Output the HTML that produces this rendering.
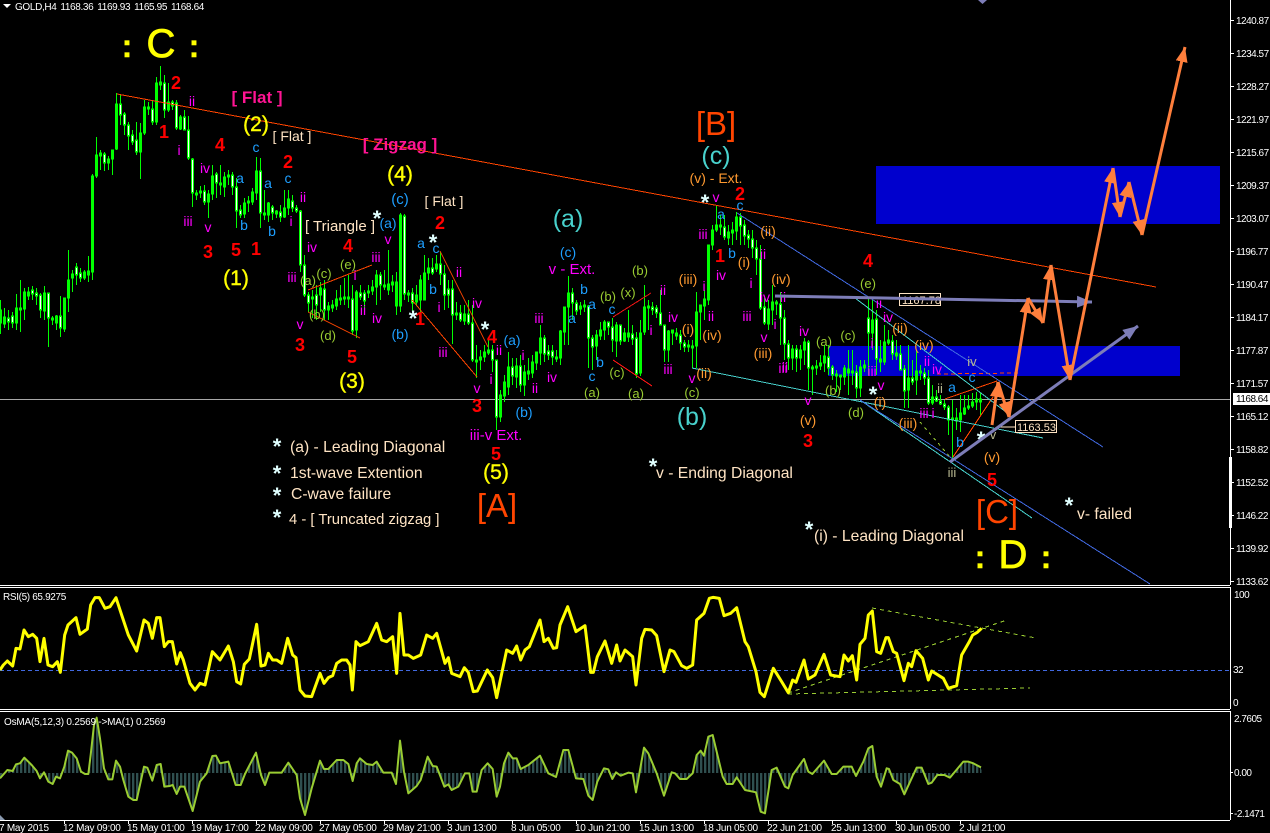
<!DOCTYPE html>
<html><head><meta charset="utf-8"><title>GOLD,H4</title>
<style>
html,body{margin:0;padding:0;background:#000;width:1270px;height:833px;overflow:hidden}
svg{display:block}
text{font-family:"Liberation Sans",Arial,sans-serif}
.ax text{fill:#fff;font-size:10px}
.pr text{letter-spacing:-.5px}
.c{text-anchor:middle}
.m text{fill:#f0f;font-size:14px}
.b text{fill:#1e9fff;font-size:14px}
.g text{fill:#9acd32;font-size:13px}
.o text{fill:#ff9a30;font-size:14px}
.r text{fill:#f00;font-size:18px;font-weight:bold}
.Y text{fill:#ff0;font-size:21px;stroke:#ff0;stroke-width:.4px}
.t text{fill:#48d1cc;font-size:25px}
.s text{fill:#e0ffff;font-size:22px;font-weight:bold}
.n text{fill:#ffe4c4;font-size:15.7px}
.w text{fill:#ffe4c4;font-size:14px}
.p text{fill:#ff1493;font-size:17px;font-weight:bold}
.e text{fill:#ff4500;font-size:33px}
</style></head><body>
<svg xmlns="http://www.w3.org/2000/svg" width="1270" height="833" viewBox="0 0 1270 833">
<defs>
<marker id="ao" markerUnits="userSpaceOnUse" markerWidth="16" markerHeight="12" refX="15" refY="6" orient="auto"><path d="M0 0L15 6L0 12z" fill="#ff7f3c"/></marker>
<marker id="ap" markerUnits="userSpaceOnUse" markerWidth="16" markerHeight="12" refX="15" refY="6" orient="auto"><path d="M0 0L15 6L0 12z" fill="#7d7db8"/></marker>
<pattern id="h" patternUnits="userSpaceOnUse" width="12" height="12"><rect x="0" y="0" width="7" height="12" fill="#2f4f4f"/></pattern>
</defs>
<rect width="1270" height="833" fill="#000"/>
<!-- zones -->
<rect x="876" y="166" width="344" height="58" fill="#0000cd"/>
<rect x="828" y="346" width="352" height="30" fill="#0000cd"/>
<!-- price line -->
<path d="M0 399.5H1230" stroke="#a8a8a8" stroke-width="1"/>
<!-- candles -->
<g transform="translate(.5 0)" shape-rendering="crispEdges">
<path fill="none" stroke="#0f0" stroke-width="1" d="M0 300V334M4 308V328M8 310V330M12 312V328M16 294V330M20 280V332M24 288V320M28 287V300M32 286V300M36 288V305M40 293V318M44 286V320M48 293V347M52 316V325M56 315V330M60 296V337M64 298V332M68 250V312M72 270V292M76 263V285M80 268V282M84 270V280M88 256V282M92 174V280M96 137V178M100 150V170M104 152V171M108 156V170M112 150V175M116 93V150M120 95V125M124 112V135M128 122V150M132 130V145M136 122V155M140 123V179M144 100V135M148 102V115M152 100V125M156 77V125M160 66V90M164 75V118M168 83V112M172 100V110M176 100V130M180 115V130M184 110V130M188 116V160M192 158V207M196 190V200M200 186V198M204 185V205M208 190V218M212 165V200M216 172V198M220 165V195M224 172V197M228 170V185M232 172V195M236 178V228M240 205V218M244 198V218M248 196V212M252 188V205M256 157V200M260 158V228M264 190V220M268 202V222M272 205V220M276 210V218M280 205V222M284 190V218M288 190V215M292 195V212M296 205V213M300 210V272M304 255V297M308 292V312M312 290V318M316 285V320M320 282V312M324 280V320M328 302V320M332 300V312M336 290V310M340 285V305M344 278V305M348 275V308M352 285V335M356 290V338M360 285V300M364 290V310M368 285V298M372 280V295M376 270V305M380 272V300M384 270V290M388 250V295M392 275V292M396 272V315M400 213V312M404 214V300M408 290V302M412 288V312M416 285V305M420 275V318M424 255V300M428 258V280M432 258V275M436 255V272M440 252V285M444 265V310M448 280V308M452 280V344M456 302V320M460 305V322M464 305V325M468 300V325M472 305V362M476 345V378M480 350V370M484 345V362M488 340V355M492 345V372M496 360V430M500 390V422M504 375V402M508 352V395M512 358V385M516 358V388M520 355V392M524 365V396M528 358V380M532 355V378M536 352V370M540 325V365M544 335V362M548 345V360M552 345V365M556 350V362M560 330V365M564 308V345M568 276V345M572 288V320M576 300V315M580 302V315M584 300V312M588 305V368M592 335V370M596 330V360M600 322V340M604 320V340M608 322V335M612 318V352M616 322V357M620 325V345M624 328V342M628 310V342M632 325V345M636 332V378M640 320V376M644 285V335M648 300V330M652 302V315M656 305V318M660 290V325M664 325V362M668 330V362M672 330V345M676 328V340M680 330V350M684 340V352M688 340V352M692 340V368M696 292V368M700 305V340M704 290V320M708 245V305M712 225V250M716 206V232M720 215V235M724 215V240M728 225V245M732 222V245M736 212V240M740 213V245M744 220V245M748 230V248M752 230V258M756 240V275M760 245V310M764 298V325M768 300V330M772 285V325M776 300V315M780 292V345M784 310V360M788 340V370M792 345V370M796 345V372M800 345V370M804 338V365M808 340V390M812 365V395M816 360V375M820 355V370M824 345V372M828 345V375M832 365V380M836 370V392M840 375V390M844 365V385M848 350V395M852 350V385M856 365V398M860 360V397M864 360V372M868 298V375M872 300V350M876 310V375M880 340V372M884 325V365M888 330V345M892 335V360M896 340V360M900 345V370M904 365V408M908 345V408M912 360V385M916 350V395M920 365V380M924 368V385M928 370V405M932 385V405M936 390V402M940 395V405M944 400V410M948 405V435M952 400V460M956 408V430M960 395V432M964 395V415M968 395V410M972 393V408M976 392V410M980 393V415"/>
<g fill="none" stroke="#0f0" stroke-width="3" stroke-linecap="square">
<path d="M0 311V322M4 318V323M16 309V322M24 293V308M28 293V295M44 294V310M56 317V322M64 299V328M68 281V297M72 275V277M84 273V277M88 272V274M92 177V271M96 156V175M108 160V162M112 151V158M116 105V148M140 134V151M144 108V132M156 84V121M168 103V109M180 118V128M200 192V192M208 195V201M212 177V193M224 178V186M228 176V176M244 204V213M248 202V202M252 193V201M256 172V192M268 204V214M284 209V216M288 200V207M320 289V294M328 307V309M332 307V306M336 300V305M340 299V299M356 293V329M368 292V292M372 288V290M376 276V286M388 285V289M392 283V284M396 283V305M400 216V305M416 296V301M420 281V299M424 274V299M428 269V272M436 265V268M464 315V320M480 358V359M484 353V356M500 396V416M504 383V395M508 368V386M516 367V376M524 373V384M532 363V372M536 353V362M540 339V352M560 332V357M564 308V331M568 294V306M580 307V308M584 306V306M596 336V345M600 331V335M604 323V329M616 326V340M624 334V340M628 334V336M640 334V372M644 308V331M668 332V349M696 313V345M700 306V311M704 300V305M708 246V299M712 231V244M716 226V229M728 233V237M732 231V232M736 218V230M768 310V323M772 303V309M792 350V357M800 351V357M804 343V349M816 367V367M820 364V365M824 357V362M844 369V376M852 372V372M860 368V387M864 366V367M872 321V332M884 343V361M908 379V389M916 372V379M932 398V402M960 414V419M964 409V413M968 407V407M972 403V405M976 400V401"/>
<path d="M8 319V321M12 317V322M20 309V309M32 291V293M36 294V295M40 296V309M48 294V317M52 319V319M60 317V327M76 268V274M80 274V277M100 154V155M104 155V162M120 105V114M124 115V124M128 126V135M132 136V141M136 141V151M148 108V108M152 110V121M160 84V83M164 84V109M172 103V105M176 104V127M184 118V129M188 131V157M192 160V192M196 194V194M204 192V201M216 175V182M220 184V184M232 176V186M236 188V210M240 211V214M260 172V212M264 214V214M272 208V212M276 213V212M280 213V216M292 202V207M296 209V210M300 212V264M304 266V294M308 296V302M312 298V298M316 296V304M324 290V309M344 298V298M348 298V298M352 300V330M360 294V296M364 294V300M380 276V284M384 286V286M404 217V293M408 294V294M412 294V302M432 269V272M440 265V273M444 275V294M448 290V294M452 290V314M456 314V314M460 314V319M468 315V322M472 324V359M476 361V361M488 351V352M492 351V359M496 361V416M512 368V375M520 367V384M528 373V372M544 339V353M548 352V354M552 352V356M556 358V358M572 294V302M576 304V310M588 307V337M592 339V346M608 323V326M612 328V339M620 326V340M632 335V338M636 339V373M648 307V307M652 308V309M656 309V312M660 314V324M664 326V349M672 332V331M676 334V335M680 336V342M684 344V346M688 346V346M692 347V347M720 226V226M724 228V236M740 218V225M744 226V235M748 236V238M752 240V247M756 249V258M760 260V307M764 308V322M776 303V303M780 305V317M784 319V343M788 345V357M796 350V357M808 343V367M812 368V368M828 358V367M832 368V374M836 375V375M840 376V376M848 370V372M856 373V387M868 319V332M876 320V358M880 360V361M888 342V341M892 342V353M896 355V354M900 355V369M904 370V390M912 379V381M920 372V372M924 374V377M928 379V402M936 398V400M940 402V403M944 405V406M948 408V419M952 419V419M956 420V419M980 400V401"/>
</g>
<path fill="none" stroke="#fff" stroke-width="1" d="M8 319V321M12 317V322M32 291V293M36 294V295M40 296V309M48 294V317M60 317V327M76 268V274M80 274V277M104 155V162M120 105V114M124 115V124M128 126V135M132 136V141M136 141V151M152 110V121M164 84V109M172 103V105M176 104V127M184 118V129M188 131V157M192 160V192M204 192V201M216 175V182M232 176V186M236 188V210M240 211V214M260 172V212M272 208V212M280 213V216M292 202V207M296 209V210M300 212V264M304 266V294M308 296V302M316 296V304M324 290V309M352 300V330M360 294V296M364 294V300M380 276V284M404 217V293M412 294V302M432 269V272M440 265V273M444 275V294M448 290V294M452 290V314M460 314V319M468 315V322M472 324V359M492 351V359M496 361V416M512 368V375M520 367V384M544 339V353M548 352V354M552 352V356M572 294V302M576 304V310M588 307V337M592 339V346M608 323V326M612 328V339M620 326V340M632 335V338M636 339V373M652 308V309M656 309V312M660 314V324M664 326V349M680 336V342M684 344V346M724 228V236M740 218V225M744 226V235M748 236V238M752 240V247M756 249V258M760 260V307M764 308V322M780 305V317M784 319V343M788 345V357M796 350V357M808 343V367M828 358V367M832 368V374M856 373V387M868 319V332M876 320V358M892 342V353M900 355V369M904 370V390M912 379V381M924 374V377M928 379V402M936 398V400M940 402V403M944 405V406M948 408V419"/>
</g>
<!-- thin lines -->
<g fill="none" stroke-width="1" shape-rendering="crispEdges">
<path stroke="#ff4500" d="M117 94L1156 287M308 290L372 265M308 312L360 338M440 251L488 347M412 300L477 377"/>
<path stroke="#f01414" d="M613 317L651 293M613 360L652 386"/>
<path stroke="#ff4500" d="M945 399L997 381M953 457L993 397"/>
<path stroke="#ff4500" stroke-dasharray="4 3" d="M937 374L1018 373"/>
<path stroke="#48d1cc" d="M692 368L1043 438M855 298L1010 415M860 400L1032 518"/>
<path stroke="#4169e1" d="M737 213L1103 447M860 400L1150 584"/>
<path stroke="#9acd32" stroke-dasharray="3 4" d="M920 422L950 457"/>
</g>
<!-- price boxes -->
<path d="M1000 427H1015" stroke="#ffe4c4"/>
<rect x="899.5" y="293.5" width="41" height="12" fill="#000" stroke="#ffe4c4"/>
<text x="902" y="304" fill="#ffe4c4" font-size="11">1167.78</text>
<rect x="1015.5" y="420.5" width="41" height="12" fill="#000" stroke="#ffe4c4"/>
<text x="1017" y="431" fill="#ffe4c4" font-size="11">1163.53</text>
<!-- labels -->
<g class="m c">
<text x="192" y="106">ii</text><text x="179" y="155">i</text><text x="205" y="173">iv</text><text x="188" y="226">iii</text><text x="208" y="232">v</text><text x="303" y="202">ii</text><text x="291" y="226">i</text><text x="312" y="252">iv</text><text x="292" y="282">iii</text><text x="376" y="262">iii</text><text x="388" y="244">v</text><text x="355" y="280">i</text><text x="300" y="329">v</text><text x="363" y="315">ii</text><text x="377" y="323">iv</text><text x="459" y="277">ii</text><text x="439" y="312">i</text><text x="477" y="308">iv</text><text x="443" y="357">iii</text><text x="477" y="393">v</text><text x="499" y="355">ii</text><text x="491" y="384">i</text><text x="523" y="360">i</text><text x="539" y="323">iii</text><text x="535" y="393">ii</text><text x="552" y="382">iv</text><text x="663" y="295">ii</text><text x="673" y="322">iv</text><text x="651" y="335">i</text><text x="668" y="374">iii</text><text x="704" y="291">i</text><text x="711" y="321">ii</text><text x="703" y="239">iii</text><text x="721" y="280">iv</text><text x="716" y="202">v</text><text x="763" y="259">ii</text><text x="751" y="288">i</text><text x="747" y="321">iii</text><text x="765" y="302">iv</text><text x="764" y="342">v</text><text x="775" y="329">i</text><text x="783" y="302">ii</text><text x="783" y="373">iii</text><text x="804" y="336">iv</text><text x="808" y="405">v</text><text x="692" y="383">v</text><text x="785" y="372">ii</text><text x="879" y="308">ii</text><text x="888" y="322">iv</text><text x="872" y="348">i</text><text x="872" y="376">iii</text><text x="927" y="366">ii</text><text x="937" y="374">iv</text><text x="924" y="418">iii</text><text x="933" y="418">i</text><text x="881" y="390">v</text>
<text x="496" y="440" style="font-size:15px">iii-v Ext.</text><text x="572" y="274" style="font-size:15px">v - Ext.</text>
</g>
<g class="b c">
<text x="240" y="183">a</text><text x="256" y="152">c</text><text x="244" y="230">b</text><text x="268" y="188">a</text><text x="288" y="183">c</text><text x="272" y="236">b</text><text x="388" y="228">(a)</text><text x="400" y="204" style="font-size:15px">(c)</text><text x="400" y="339">(b)</text><text x="421" y="248">a</text><text x="436" y="253">c</text><text x="433" y="294">b</text><text x="512" y="345">(a)</text><text x="524" y="417">(b)</text><text x="568" y="257">(c)</text><text x="584" y="294">b</text><text x="592" y="309">a</text><text x="572" y="323">a</text><text x="600" y="367">b</text><text x="592" y="381">c</text><text x="612" y="314">c</text><text x="721" y="219">a</text><text x="732" y="258">b</text><text x="740" y="210">c</text><text x="972" y="382">c</text><text x="952" y="392">a</text><text x="960" y="447">b</text>
</g>
<g class="g c">
<text x="308" y="285">(a)</text><text x="324" y="278">(c)</text><text x="348" y="269">(e)</text><text x="317" y="319">(b)</text><text x="328" y="340">(d)</text><text x="608" y="301">(b)</text><text x="628" y="297">(x)</text><text x="640" y="275">(b)</text><text x="617" y="377">(c)</text><text x="592" y="397">(a)</text><text x="636" y="398">(a)</text><text x="692" y="397">(c)</text><text x="824" y="346">(a)</text><text x="833" y="395">(b)</text><text x="868" y="288">(e)</text><text x="848" y="340">(c)</text><text x="856" y="417">(d)</text>
</g>
<g class="o c">
<text x="688" y="334">(i)</text><text x="688" y="284">(iii)</text><text x="712" y="340">(iv)</text><text x="704" y="378">(ii)</text><text x="744" y="267">(i)</text><text x="768" y="236">(ii)</text><text x="781" y="284">(iv)</text><text x="763" y="358">(iii)</text><text x="808" y="425">(v)</text><text x="900" y="333">(ii)</text><text x="924" y="350">(iv)</text><text x="908" y="428">(iii)</text><text x="880" y="407">(i)</text><text x="992" y="462">(v)</text><text x="716" y="183">(v) - Ext.</text>
</g>
<g class="c" fill="#b8b890" font-size="13">
<text x="972" y="366">iv</text><text x="940" y="393">ii</text><text x="952" y="477">iii</text><text x="993" y="439">v</text>
</g>
<g class="r c">
<text x="176" y="89">2</text><text x="164" y="138">1</text><text x="220" y="151">4</text><text x="288" y="168">2</text><text x="208" y="258">3</text><text x="236" y="256">5</text><text x="256" y="255">1</text><text x="348" y="252">4</text><text x="300" y="351">3</text><text x="352" y="363">5</text><text x="440" y="229">2</text><text x="420" y="325">1</text><text x="492" y="343">4</text><text x="477" y="412">3</text><text x="496" y="460">5</text><text x="720" y="262">1</text><text x="740" y="200">2</text><text x="808" y="447">3</text><text x="868" y="267">4</text><text x="992" y="486">5</text>
</g>
<g class="Y c">
<text x="236" y="285">(1)</text><text x="256" y="131">(2)</text><text x="352" y="388">(3)</text><text x="400" y="181">(4)</text><text x="496" y="479">(5)</text>
<text x="161" y="57" style="font-size:40px;stroke-width:.8px">C</text><text x="127" y="57" style="font-size:32px;font-weight:bold">:</text><text x="194" y="57" style="font-size:32px;font-weight:bold">:</text>
<text x="1013" y="568" style="font-size:40px;stroke-width:.8px">D</text><text x="980" y="568" style="font-size:32px;font-weight:bold">:</text><text x="1046" y="568" style="font-size:32px;font-weight:bold">:</text>
</g>
<g class="t c"><text x="568" y="227">(a)</text><text x="692" y="425">(b)</text><text x="716" y="164">(c)</text></g>
<g class="e c"><text x="716" y="135">[B]</text><text x="497" y="517">[A]</text><text x="997" y="523">[C]</text></g>
<g class="p c"><text x="257" y="103">[ Flat ]</text><text x="400" y="150">[ Zigzag ]</text></g>
<g class="w c"><text x="292" y="141">[ Flat ]</text><text x="340" y="231" style="font-size:15px">[ Triangle ]</text><text x="444" y="206">[ Flat ]</text></g>
<g class="n">
<text x="290" y="452">(a) - Leading Diagonal</text><text x="290" y="478">1st-wave Extention</text><text x="291" y="499">C-wave failure</text><text x="289" y="524" style="font-size:14.8px">4 - [ Truncated zigzag ]</text><text x="656" y="478">v - Ending Diagonal</text><text x="814" y="541">(i) - Leading Diagonal</text><text x="1077" y="519">v- failed</text>
</g>
<g class="s c">
<text x="377" y="226">*</text><text x="413" y="326">*</text><text x="433" y="250">*</text><text x="485" y="337">*</text><text x="705" y="210">*</text><text x="873" y="402">*</text><text x="981" y="447">*</text><text x="277" y="454">*</text><text x="277" y="481">*</text><text x="277" y="503">*</text><text x="277" y="525">*</text><text x="653" y="474">*</text><text x="809" y="537">*</text><text x="1069" y="513">*</text>
</g>
<!-- purple arrows -->
<g fill="none" stroke="#7d7db8" stroke-width="3">
<path d="M775 296L1092 302" marker-end="url(#ap)"/>
<path d="M950 462L1138 326" marker-end="url(#ap)"/>
</g>
<!-- orange arrows -->
<g fill="none" stroke="#ff7f3c" stroke-width="3">
<path d="M992 425L998 382" marker-end="url(#ao)"/>
<path d="M998 382L1009 417" marker-end="url(#ao)"/>
<path d="M1009 417L1028 298" marker-end="url(#ao)"/>
<path d="M1028 298L1043 323" marker-end="url(#ao)"/>
<path d="M1043 323L1051 265" marker-end="url(#ao)"/>
<path d="M1051 265L1070 380" marker-end="url(#ao)"/>
<path d="M1070 380L1113 168" marker-end="url(#ao)"/>
<path d="M1113 168L1120 217" marker-end="url(#ao)"/>
<path d="M1120 217L1129 182" marker-end="url(#ao)"/>
<path d="M1129 182L1142 235" marker-end="url(#ao)"/>
<path d="M1142 235L1185 47" marker-end="url(#ao)"/>
</g>
<!-- cover below main panel -->
<rect x="0" y="585" width="1270" height="248" fill="#000"/>
<!-- RSI -->
<path d="M0 670.5H1230" stroke="#4169e1" stroke-dasharray="4 3"/>
<g fill="none" stroke="#9acd32" stroke-dasharray="4 4" stroke-width="1" shape-rendering="crispEdges">
<path d="M872 608L1036 638M788 693L1007 620M788 694L1030 688"/>
</g>
<g transform="translate(0 585) scale(.33333)" fill="none" stroke="#ff0" stroke-width="9" stroke-linejoin="round">
<polyline points="0,255 10,240 22,228 38,243 48,190 60,192 72,135 85,155 98,148 110,160 120,230 132,160 144,240 158,245 172,230 181,262 194,150 204,120 228,98 240,148 262,132 272,60 285,38 298,38 315,70 330,65 348,38 365,90 385,150 410,198 432,105 445,115 457,160 470,98 480,98 493,185 505,170 517,170 530,237 541,203 550,225 570,295 585,315 600,295 615,300 637,200 660,225 685,183 700,230 710,290 722,297 733,238 748,222 770,118 783,243 795,240 805,205 818,225 830,225 845,235 863,160 878,210 888,218 900,315 915,333 935,335 960,265 972,295 985,278 998,272 1010,235 1025,225 1040,225 1050,240 1057,315 1068,170 1080,182 1105,170 1130,115 1145,165 1160,170 1178,155 1190,265 1200,85 1212,210 1225,210 1240,220 1262,210 1280,150 1298,160 1310,145 1335,235 1345,218 1355,265 1380,275 1393,248 1405,262 1420,320 1432,318 1462,255 1478,278 1490,338 1500,290 1520,195 1538,205 1550,183 1562,225 1575,195 1588,185 1620,105 1632,170 1645,160 1660,190 1670,188 1680,120 1703,65 1728,140 1755,122 1772,262 1780,262 1792,215 1815,168 1835,235 1850,180 1860,228 1875,195 1898,215 1908,300 1925,160 1935,133 1955,135 1970,152 1992,260 2010,195 2022,200 2045,242 2060,250 2078,240 2090,105 2112,85 2128,40 2140,37 2158,40 2172,92 2192,85 2210,68 2235,170 2245,185 2268,260 2280,322 2293,335 2320,250 2345,290 2365,323 2378,285 2388,292 2412,225 2425,282 2445,270 2472,208 2492,270 2520,275 2532,210 2545,228 2557,212 2570,285 2580,178 2595,160 2605,90 2617,78 2630,200 2642,205 2658,158 2665,158 2680,200 2690,205 2712,287 2725,235 2735,245 2748,197 2768,220 2785,285 2795,258 2830,280 2845,310 2870,302 2885,210 2908,170 2918,150 2932,142 2945,130"/>
</g>
<!-- OsMA -->
<g transform="translate(0 585) scale(.33333)" stroke-linejoin="round">
<polygon fill="url(#h)" shape-rendering="crispEdges" points="0,564 0,580 22,555 38,558 48,538 60,535 73,518 95,540 110,558 120,580 132,562 145,590 158,597 168,575 180,580 193,545 204,497 216,503 230,520 243,560 255,567 265,567 272,510 282,420 290,398 300,460 312,550 325,583 337,583 348,527 360,545 370,585 385,635 400,645 410,645 432,545 442,548 457,587 470,540 482,537 493,605 510,603 518,600 530,627 540,605 553,605 578,678 600,590 620,565 637,513 648,512 660,535 685,530 707,600 722,600 735,567 768,503 783,570 795,600 808,563 845,563 865,533 890,570 900,640 915,690 935,610 960,527 972,552 985,552 1010,525 1030,525 1045,537 1058,588 1070,535 1080,520 1100,537 1118,540 1130,530 1150,563 1175,563 1188,597 1200,467 1212,560 1225,625 1250,603 1262,585 1283,515 1298,543 1310,545 1333,605 1345,598 1355,615 1375,605 1395,565 1408,565 1418,620 1430,620 1445,555 1463,535 1478,552 1490,635 1500,605 1512,535 1525,503 1538,520 1550,520 1562,552 1585,540 1620,512 1645,565 1668,576 1690,495 1705,495 1728,580 1750,582 1765,632 1778,645 1792,590 1812,550 1825,553 1837,582 1848,562 1862,572 1885,563 1898,565 1908,622 1932,488 1945,505 1970,565 1992,632 2015,562 2025,565 2040,582 2060,582 2078,565 2090,510 2102,497 2112,512 2125,455 2138,450 2168,575 2180,597 2198,597 2210,577 2235,615 2268,622 2282,680 2295,685 2315,555 2330,548 2355,605 2365,610 2378,570 2412,522 2425,560 2437,567 2472,527 2495,567 2510,567 2530,545 2555,545 2568,573 2590,530 2605,490 2617,483 2630,575 2643,605 2660,550 2667,552 2680,585 2700,597 2713,628 2735,580 2750,548 2765,548 2785,597 2795,593 2812,570 2833,570 2850,578 2890,530 2905,530 2920,535 2943,547 2945,564"/>
<polyline fill="none" stroke="#9acd32" stroke-width="6" points="0,580 22,555 38,558 48,538 60,535 73,518 95,540 110,558 120,580 132,562 145,590 158,597 168,575 180,580 193,545 204,497 216,503 230,520 243,560 255,567 265,567 272,510 282,420 290,398 300,460 312,550 325,583 337,583 348,527 360,545 370,585 385,635 400,645 410,645 432,545 442,548 457,587 470,540 482,537 493,605 510,603 518,600 530,627 540,605 553,605 578,678 600,590 620,565 637,513 648,512 660,535 685,530 707,600 722,600 735,567 768,503 783,570 795,600 808,563 845,563 865,533 890,570 900,640 915,690 935,610 960,527 972,552 985,552 1010,525 1030,525 1045,537 1058,588 1070,535 1080,520 1100,537 1118,540 1130,530 1150,563 1175,563 1188,597 1200,467 1212,560 1225,625 1250,603 1262,585 1283,515 1298,543 1310,545 1333,605 1345,598 1355,615 1375,605 1395,565 1408,565 1418,620 1430,620 1445,555 1463,535 1478,552 1490,635 1500,605 1512,535 1525,503 1538,520 1550,520 1562,552 1585,540 1620,512 1645,565 1668,576 1690,495 1705,495 1728,580 1750,582 1765,632 1778,645 1792,590 1812,550 1825,553 1837,582 1848,562 1862,572 1885,563 1898,565 1908,622 1932,488 1945,505 1970,565 1992,632 2015,562 2025,565 2040,582 2060,582 2078,565 2090,510 2102,497 2112,512 2125,455 2138,450 2168,575 2180,597 2198,597 2210,577 2235,615 2268,622 2282,680 2295,685 2315,555 2330,548 2355,605 2365,610 2378,570 2412,522 2425,560 2437,567 2472,527 2495,567 2510,567 2530,545 2555,545 2568,573 2590,530 2605,490 2617,483 2630,575 2643,605 2660,550 2667,552 2680,585 2700,597 2713,628 2735,580 2750,548 2765,548 2785,597 2795,593 2812,570 2833,570 2850,578 2890,530 2905,530 2920,535 2943,547"/>
</g>
<!-- frames -->
<g stroke="#fff" stroke-width="1" fill="none" shape-rendering="crispEdges">
<path d="M0 585.5H1230M0 587.5H1230M0 709.5H1230M0 711.5H1230M0 820.5H1230"/>
<path d="M1230.5 0V585M1230.5 587V709M1230.5 711V820"/>
<path d="M1230 20.5h4M1230 53.5h4M1230 86.5h4M1230 119.5h4M1230 152.5h4M1230 185.5h4M1230 218.5h4M1230 251.5h4M1230 284.5h4M1230 317.5h4M1230 350.5h4M1230 383.5h4M1230 416.5h4M1230 449.5h4M1230 482.5h4M1230 515.5h4M1230 548.5h4M1230 581.5h4M1230 772.5h3M1230 813.5h3"/>
<path d="M64.500 820v4M128.500 820v4M192.500 820v4M256.500 820v4M320.500 820v4M384.500 820v4M448.500 820v4M512.500 820v4M576.500 820v4M640.500 820v4M704.500 820v4M768.500 820v4M832.500 820v4M896.500 820v4M960.500 820v4"/>
</g>
<rect x="1229" y="457" width="3" height="71" fill="#fff"/>
<path d="M0 815L5 820H0z" fill="#8a9ab0"/>
<path d="M978 0h9l-4.500 4z" fill="#7d7db8"/>
<path d="M3 4h8l-4 4z" fill="#fff"/>
<!-- axis text -->
<g class="ax pr">
<text x="1236" y="24">1240.87</text><text x="1236" y="57">1234.57</text><text x="1236" y="90">1228.27</text><text x="1236" y="123">1221.97</text><text x="1236" y="156">1215.67</text><text x="1236" y="189">1209.37</text><text x="1236" y="222">1203.07</text><text x="1236" y="255">1196.77</text><text x="1236" y="288">1190.47</text><text x="1236" y="321">1184.17</text><text x="1236" y="354">1177.87</text><text x="1236" y="387">1171.57</text><text x="1236" y="420">1165.12</text><text x="1236" y="453">1158.82</text><text x="1236" y="486">1152.52</text><text x="1236" y="519">1146.22</text><text x="1236" y="552">1139.92</text><text x="1236" y="585">1133.62</text>
<text x="1234" y="598">100</text><text x="1233" y="673">32</text><text x="1233" y="706">0</text><text x="1234" y="722">2.7605</text><text x="1234" y="776">0.00</text><text x="1234" y="817">-2.1471</text>
</g>
<rect x="1233" y="393" width="37" height="12" fill="#fff"/>
<text x="1236" y="402" fill="#000" font-size="10" letter-spacing="-.5">1168.64</text>
<g class="ax">
<text x="15" y="10" letter-spacing="-.35" word-spacing="1.5">GOLD,H4 1168.36 1169.93 1165.95 1168.64</text>
<text x="3" y="600" letter-spacing="-.35">RSI(5) 65.9275</text>
<text x="4" y="725" letter-spacing="-.2">OsMA(5,12,3) 0.2569 -&gt;MA(1) 0.2569</text>
</g>
<g class="ax" letter-spacing="-.25">
<text x="-1" y="831">7 May 2015</text><text x="63" y="831">12 May 09:00</text><text x="127" y="831">15 May 01:00</text><text x="191" y="831">19 May 17:00</text><text x="255" y="831">22 May 09:00</text><text x="319" y="831">27 May 05:00</text><text x="383" y="831">29 May 21:00</text><text x="447" y="831">3 Jun 13:00</text><text x="511" y="831">8 Jun 05:00</text><text x="575" y="831">10 Jun 21:00</text><text x="639" y="831">15 Jun 13:00</text><text x="703" y="831">18 Jun 05:00</text><text x="767" y="831">22 Jun 21:00</text><text x="831" y="831">25 Jun 13:00</text><text x="895" y="831">30 Jun 05:00</text><text x="959" y="831">2 Jul 21:00</text>
</g>
</svg>
</body></html>
